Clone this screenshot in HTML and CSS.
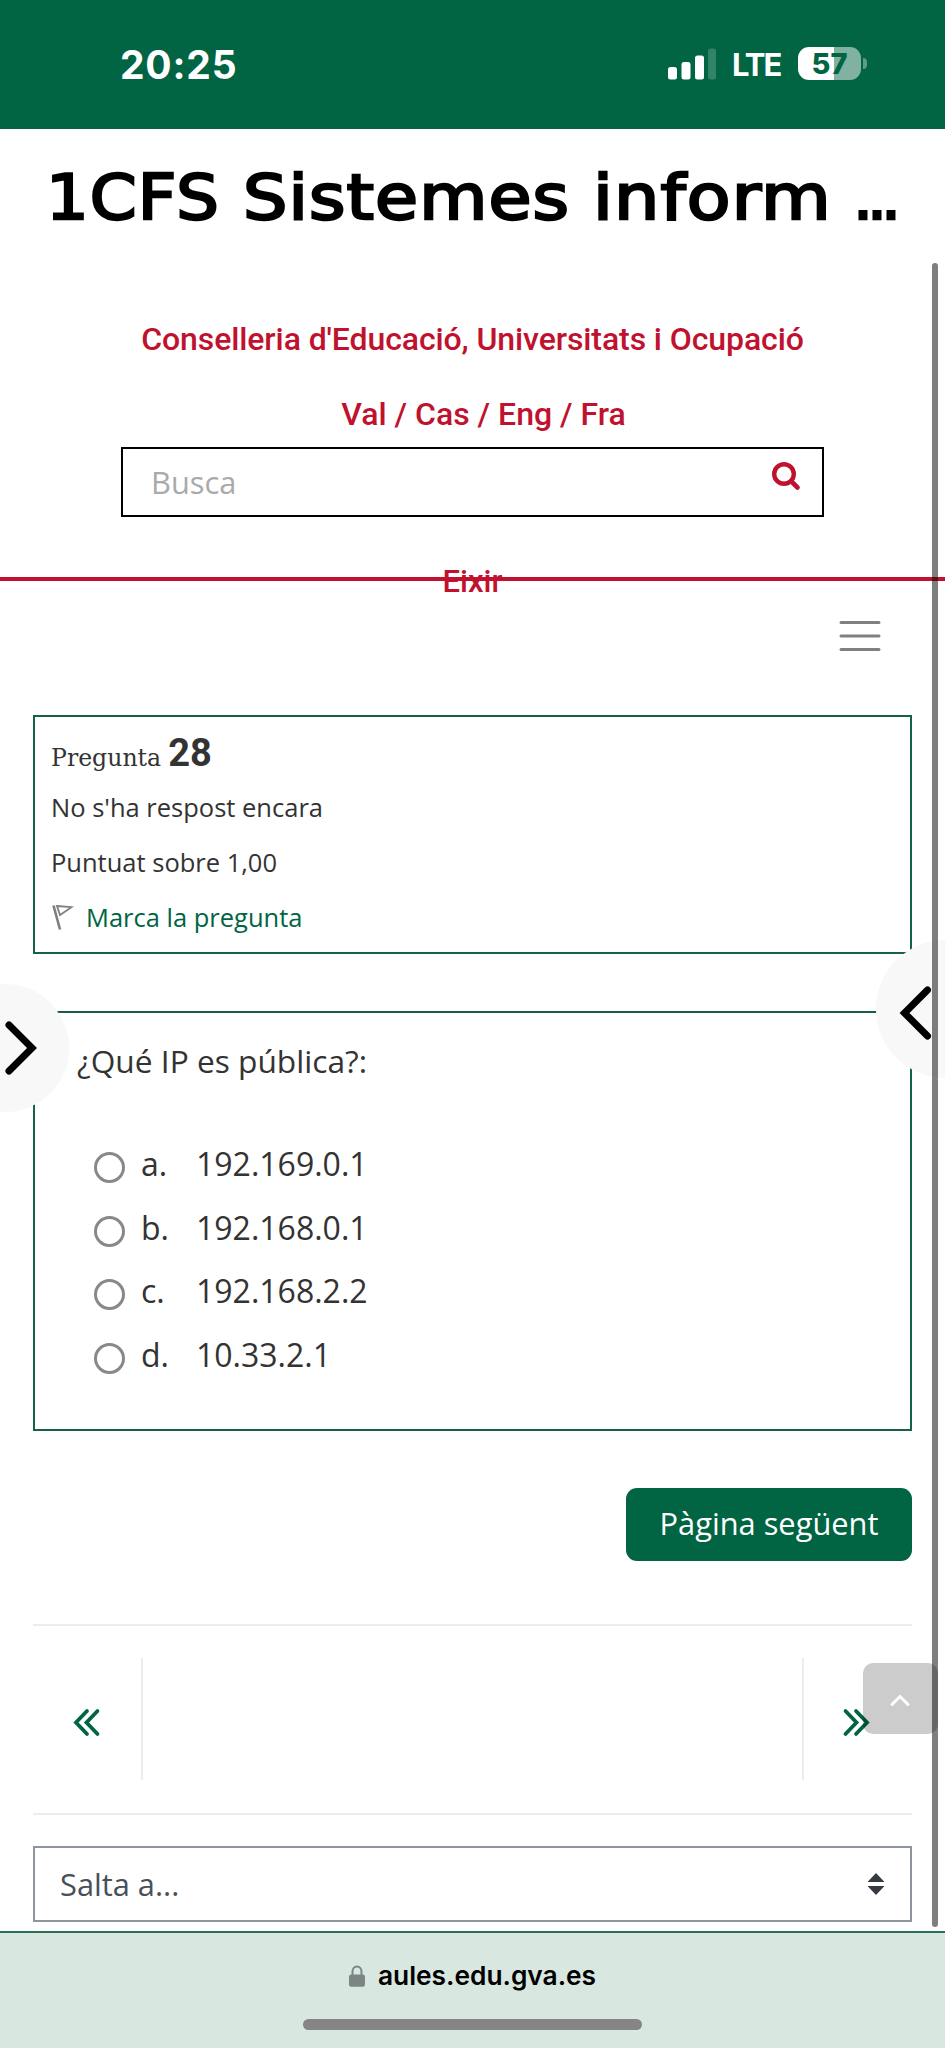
FILE: index.html
```html
<!DOCTYPE html>
<html lang="ca">
<head>
<meta charset="utf-8">
<title>1CFS Sistemes informàtics</title>
<link rel="stylesheet" href="styles.css">
</head>
<body>
<div class="statusbar">
  <span class="clock">20:25</span>
  <div class="status-icons">
    <svg class="signal" width="48" height="32" viewBox="0 0 48 32"><g fill="#fff"><rect x="0" y="19" width="9" height="12.5" rx="2.5"/><rect x="13.500" y="14" width="9" height="17.500" rx="2.500"/><rect x="27" y="7.500" width="9" height="24" rx="2.500"/><rect x="40" y="0.500" width="8" height="31" rx="2.500" opacity=".2"/></g></svg>
    <span class="lte">LTE</span>
    <div class="battery"><span class="battery-level">57</span></div>
    <span class="battery-tip"></span>
  </div>
</div>

<h1 class="title"><span class="w1">1CFS</span><span class="w2">Sistemes</span><span class="w3">inform</span><span class="w4">...</span></h1>

<header class="header">
  <a class="org">Conselleria d'Educació, Universitats i Ocupació</a>
  <nav class="langs">Val / Cas / Eng / Fra</nav>
  <div class="search">
    <span class="search-text">Busca</span>
    <svg class="search-icon" width="30" height="30" viewBox="0 0 30 30" fill="none" stroke="#c0122f"><circle cx="13" cy="12" r="9.800" stroke-width="4.400"/><path d="M20.500 19.500l6 6" stroke-width="4.600" stroke-linecap="round"/></svg>
  </div>
  <a class="logout">Eixir</a>
</header>

<div class="menu-row">
  <svg width="42" height="32" viewBox="0 0 42 32" stroke="#808080" stroke-width="3" stroke-linecap="round"><path d="M2 2.500h38M2 16h38M2 29.500h38"/></svg>
</div>

<main class="main">
  <section class="info">
    <h3 class="qno"><span class="qlabel">Pregunta</span><span class="qnum">28</span></h3>
    <div class="line state">No s'ha respost encara</div>
    <div class="line grade">Puntuat sobre 1,00</div>
    <div class="line flag">
      <svg width="23" height="27" viewBox="0 0 23 27" fill="none" stroke="#808080"><path d="M2.500 1.500L9 25.500" stroke-width="2.600"/><path d="M6 2L20.500 3.200L9 11z" stroke-width="1.800"/></svg>
      <a>Marca la pregunta</a>
    </div>
  </section>

  <section class="question">
    <p class="qtext">¿Qué IP es pública?:</p>
    <div class="answers">
      <label class="answer"><span class="radio"></span><span class="letter">a.</span><span class="value">192.169.0.1</span></label>
      <label class="answer"><span class="radio"></span><span class="letter">b.</span><span class="value">192.168.0.1</span></label>
      <label class="answer"><span class="radio"></span><span class="letter">c.</span><span class="value">192.168.2.2</span></label>
      <label class="answer"><span class="radio"></span><span class="letter">d.</span><span class="value">10.33.2.1</span></label>
    </div>
  </section>

  <div class="submit-row"><a class="next">Pàgina següent</a></div>

  <div class="activity-nav">
    <a class="prev-act"><svg width="28" height="29" viewBox="0 0 28 29" class="dbl"><path d="M14 3L3 14.500L14 26M24.500 3L13.500 14.500L24.500 26"/></svg></a>
    <span></span>
    <a class="next-act"><svg width="28" height="29" viewBox="0 0 28 29" class="dbl"><path d="M3.500 3L14.500 14.500L3.500 26M14 3L25 14.500L14 26"/></svg></a>
  </div>

  <div class="jump">
    <span>Salta a...</span>
    <svg width="18" height="22" viewBox="0 0 18 22" fill="#343a40"><path d="M.5 9L9 0L17.500 9zM.5 13L9 22L17.500 13z"/></svg>
  </div>
</main>

<footer class="browser">
  <div class="address">
    <svg width="16" height="22" viewBox="0 0 16 22"><path d="M3.500 11V6.300a4.500 4.900 0 0 1 9 0V11" fill="none" stroke="#7d8583" stroke-width="2"/><rect x="0" y="9.500" width="16" height="12.300" rx="2.200" fill="#7d8583"/></svg>
    <span>aules.edu.gva.es</span>
  </div>
  <div class="home"></div>
</footer>

<div class="drawer drawer-left"><svg width="40" height="64" viewBox="0 0 40 64"><path d="M9 9L32 32L9 55"/></svg></div>
<div class="drawer drawer-right"><svg width="40" height="64" viewBox="0 0 40 64"><path d="M30.500 9L7.500 32L30.500 55"/></svg></div>
<div class="top-btn"><svg width="22" height="14" viewBox="0 0 22 14" fill="none" stroke="#fff" stroke-width="3" stroke-linecap="round"><path d="M3 11.500L11 3.500L19 11.500"/></svg></div>
<div class="scrollbar"></div>
</body>
</html>
```
FILE: styles.css
```css
* { box-sizing: border-box; }
body { margin: 0; width: 945px; height: 2048px; position: relative; overflow: hidden; display: flex; flex-direction: column; background: #fff; color: #333; font: 32px/40px "Open Sans", sans-serif; }
h1, h3, p { margin: 0; font-weight: 400; }
svg { display: block; flex: none; }
span, a { white-space: nowrap; }

.statusbar { height: 129px; flex: none; background: #016443; display: flex; justify-content: space-between; align-items: flex-start; padding: 43px 78px 0 120px; color: #fff; font-family: Inter, sans-serif; font-weight: 700; }
.clock { font-size: 39px; line-height: 44px; letter-spacing: .8px; }
.status-icons { display: flex; align-items: center; height: 41px; }
.lte { font-size: 31px; font-weight: 700; width: 49px; margin: 3px 17px 0 16px; letter-spacing: -2px; }
.battery { width: 63px; height: 33px; border-radius: 11px; background: linear-gradient(90deg, #fff 57%, #80b1a1 57%); color: #016443; display: flex; justify-content: center; }
.battery-level { font-size: 29px; line-height: 33px; font-weight: 800; }
.battery-tip { width: 4px; height: 11px; margin-left: 2px; border-radius: 0 5px 5px 0; background: #5c9b87; }

.title { height: 138px; flex: none; display: flex; padding-left: 46px; color: #000; font: 63px/138px "DejaVu Sans", sans-serif; -webkit-text-stroke: 2.500px #000; }
.title span { letter-spacing: 1px; transform-origin: 0 50%; }
.w1 { width: 197px; transform: scaleX(1.065); }
.w2 { width: 350px; transform: scaleX(1.11); }
.title .w3 { width: 260px; transform: scaleX(1.135); }
.title .w4 { letter-spacing: -6px; }

.header { height: 314px; flex: none; padding-top: 52px; border-bottom: 4px solid #c0122f; display: flex; flex-direction: column; align-items: center; color: #c0122f; font-family: Roboto, sans-serif; font-weight: 500; }
.org { letter-spacing: -.1px; }
.langs { margin: 35px 0 13px 22px; }
.search { width: 703px; height: 70px; flex: none; border: 2px solid #000; display: flex; justify-content: space-between; padding: 13px 21px 0 28px; }
.search-text { color: #aaa; font: 30.800px/40px "Open Sans", sans-serif; }
.logout { margin-top: 45px; font-size: 31px; }

.menu-row { height: 134px; flex: none; padding: 39px 64px 0 0; display: flex; justify-content: flex-end; align-items: flex-start; }

.main { padding: 0 33px; flex: none; display: flex; flex-direction: column; }
.info { height: 239px; border: 2px solid #17614a; padding: 11px 16px 0; }
.qno { height: 52px; line-height: 50px; display: flex; align-items: baseline; gap: 7px; }
.qlabel { font-family: "DejaVu Serif", serif; font-size: 23.600px; }
.qnum { font-family: Roboto, sans-serif; font-weight: 700; font-size: 38px; }
.line { height: 55px; line-height: 55px; font-size: 25.500px; }
.flag { display: flex; align-items: center; gap: 12px; color: #016443; }

.question { margin-top: 57px; height: 420px; border: 2px solid #17614a; padding: 28px 42px 0; }
.qtext { line-height: 40px; font-size: 31.700px; }
.answers { padding: 63px 0 0 17px; }
.answer { height: 63.500px; display: flex; align-items: flex-start; line-height: 40px; }
.radio { width: 31px; height: 31px; margin-top: 8px; border: 3px solid #88888a; border-radius: 50%; }
.letter { width: 55px; margin-left: 16px; }

.submit-row { display: flex; justify-content: flex-end; margin-top: 57px; }
.next { width: 286px; height: 73px; line-height: 71px; font-size: 30.800px; text-align: center; border-radius: 11px; background: #016443; color: #fff; }

.activity-nav { margin-top: 63px; height: 191px; padding: 32px 0 33px; border: solid #ececec; border-width: 2px 0; display: grid; grid-template-columns: 110px 1fr 110px; }
.prev-act { border-right: 2px solid #ececec; padding: 50px 0 0 40px; }
.next-act { border-left: 2px solid #ececec; padding: 50px 0 0 38px; }
.dbl { fill: none; stroke: #016443; stroke-width: 3.800px; stroke-linecap: round; }

.jump { margin-top: 31px; height: 76px; border: 2px solid #8f959e; display: flex; align-items: center; justify-content: space-between; padding: 0 25px; font-size: 30.800px; color: #495057; }

.browser { margin-top: 9px; height: 117px; flex: none; border-top: 2px solid #2a7058; background: #d9e7e1; display: flex; flex-direction: column; align-items: center; color: #000; font: 600 26.300px/40px Inter, sans-serif; }
.address { display: flex; align-items: center; gap: 13px; margin-top: 23px; }
.home { width: 339px; height: 11px; margin-top: 23px; border-radius: 6px; background: #858585; }

.drawer { position: absolute; width: 69px; background: #f8f8f8; display: flex; align-items: center; }
.drawer path { fill: none; stroke: #000; stroke-width: 7px; stroke-linecap: round; }
.drawer-left { left: 0; top: 984px; height: 128px; border-radius: 0 64px 64px 0; }
.drawer-right { left: 876px; top: 940px; height: 138px; border-radius: 69px 0 0 69px; padding: 8px 0 0 21px; }
.top-btn { position: absolute; left: 863px; top: 1663px; width: 75px; height: 71px; border-radius: 10px; background: rgba(0,0,0,.2); padding: 30px 0 0 26px; }
.scrollbar { position: absolute; left: 932px; top: 263px; width: 6px; height: 1664px; border-radius: 3px; background: rgba(0,0,0,.5); }
```
